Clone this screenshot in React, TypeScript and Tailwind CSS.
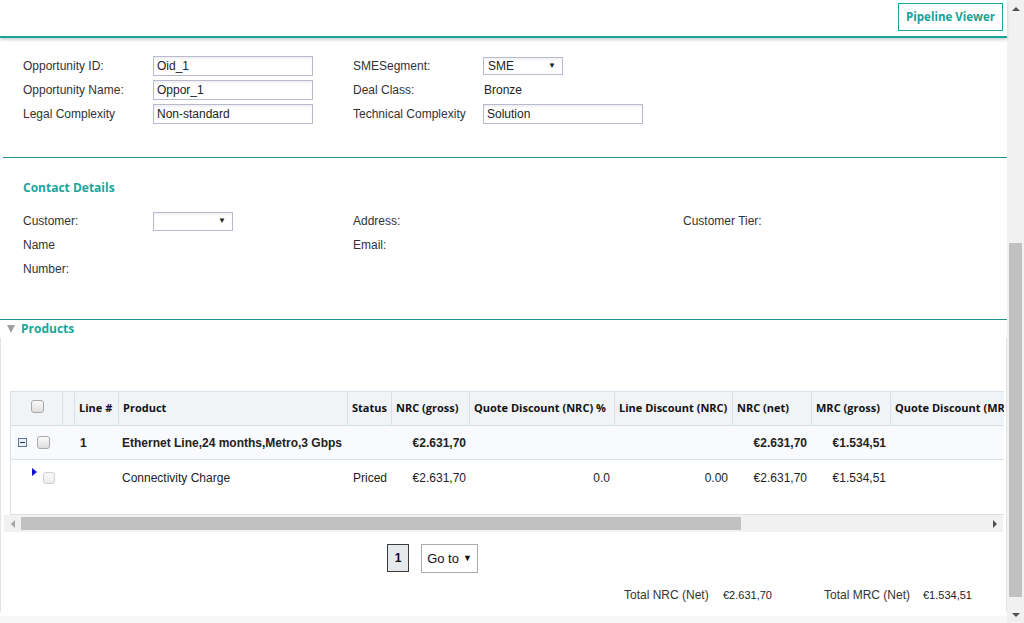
import React from "react";

function Field({ label, children }: { label: string; children?: React.ReactNode }) {
  return (
    <div className="flex w-[330px] shrink-0 items-center">
      <span className="w-[130px] shrink-0">{label}</span>
      {children}
    </div>
  );
}

function TextBox({ value, width = "w-[160px]" }: { value: string; width?: string }) {
  return (
    <div
      className={`flex h-[20px] ${width} items-center border border-[#b9bad0] bg-white pl-[3px] text-[#222] shadow-[inset_0_2px_2px_rgba(0,0,0,0.06)]`}
    >
      {value}
    </div>
  );
}

function SelectBox({ value, h = "h-[18px]" }: { value: string; h?: string }) {
  return (
    <div
      className={`flex ${h} w-[80px] items-center justify-between border border-[#b9bad0] bg-white pl-[4px] pr-[6px] text-[#222] shadow-[inset_0_2px_2px_rgba(0,0,0,0.05)]`}
    >
      <span>{value}</span>
      <span className="text-[8px] leading-none text-[#222]">▼</span>
    </div>
  );
}

function Check({ disabled = false }: { disabled?: boolean }) {
  return (
    <span
      className={
        disabled
          ? "inline-block h-[12px] w-[12px] rounded-[3px] border border-[#d0d0d0] bg-linear-to-b from-[#f8f8f8] to-[#ededed]"
          : "inline-block h-[13px] w-[13px] rounded-[3px] border border-[#a8a8a8] bg-linear-to-b from-[#fbfbfb] to-[#dedede]"
      }
    />
  );
}

const cols =
  "grid grid-cols-[52px_12px_44px_229px_44px_78px_145px_118px_79px_79px_140px]";

const headers = [
  "",
  "",
  "Line #",
  "Product",
  "Status",
  "NRC (gross)",
  "Quote Discount (NRC) %",
  "Line Discount (NRC)",
  "NRC (net)",
  "MRC (gross)",
  "Quote Discount (MRC) %",
];

function ProductsTable() {
  return (
    <div className="ml-[9px] h-[124px] w-[994px] overflow-hidden border-t border-l border-b border-[#d9e1e8]">
      <div className={`${cols} h-[34px] w-[1120px] border-b border-[#d9e1e8] bg-[#f1f4f7] font-['Open_Sans'] text-[11px] font-bold text-[#111]`}>
        {headers.map((h, i) => (
          <div
            key={i}
            className="flex items-center justify-start overflow-hidden whitespace-nowrap border-r border-[#d9e1e8] pl-[4px]"
          >
            {i === 0 ? (
              <span className="ml-[16px]">
                <Check />
              </span>
            ) : (
              h
            )}
          </div>
        ))}
      </div>

      <div className={`${cols} h-[34px] w-[1120px] items-center border-b border-[#d9e1e8] bg-[#f9fafd] font-bold text-[#222]`}>
        <div className="flex items-center gap-[10px] pl-[7px]">
          <span className="flex h-[9px] w-[9px] items-center justify-center border border-[#5f7593] bg-[#e9eef5]">
            <span className="h-px w-[5px] bg-[#1f2f47]" />
          </span>
          <Check />
        </div>
        <div />
        <div className="pl-[5px]">1</div>
        <div className="whitespace-nowrap pl-[3px]">Ethernet Line,24 months,Metro,3 Gbps</div>
        <div />
        <div className="pr-[4px] text-right">€2.631,70</div>
        <div />
        <div />
        <div className="pr-[5px] text-right">€2.631,70</div>
        <div className="pr-[5px] text-right">€1.534,51</div>
        <div />
      </div>

      <div className={`${cols} h-[35px] w-[1120px] items-center text-[#222]`}>
        <div className="flex items-center pl-[21px]">
          <span className="mb-[12px] h-0 w-0 border-y-[4px] border-l-[5px] border-y-transparent border-l-[#1010d0]" />
          <span className="ml-[6px] flex">
            <Check disabled />
          </span>
        </div>
        <div />
        <div />
        <div className="whitespace-nowrap pl-[3px]">Connectivity Charge</div>
        <div className="pl-[5px]">Priced</div>
        <div className="pr-[4px] text-right">€2.631,70</div>
        <div className="pr-[5px] text-right">0.0</div>
        <div className="pr-[5px] text-right">0.00</div>
        <div className="pr-[5px] text-right">€2.631,70</div>
        <div className="pr-[5px] text-right">€1.534,51</div>
        <div />
      </div>
    </div>
  );
}

function HScrollbar() {
  return (
    <div className="ml-[3px] flex h-[17px] w-[999px] items-center bg-[#f1f1f1]">
      <div className="flex w-[17px] items-center justify-center">
        <span className="h-0 w-0 border-y-[4px] border-r-[4px] border-y-transparent border-r-[#a3a3a3]" />
      </div>
      <div className="h-[13px] w-[720px] bg-[#c1c1c1]" />
      <div className="flex-1" />
      <div className="flex w-[17px] items-center justify-center">
        <span className="h-0 w-0 border-y-[4px] border-l-[4px] border-y-transparent border-l-[#505050]" />
      </div>
    </div>
  );
}

function VScrollbar() {
  return (
    <div className="flex h-full w-[17px] flex-col bg-[#f1f1f1]">
      <div className="flex h-[17px] items-center justify-center">
        <span className="h-0 w-0 border-x-[4px] border-b-[4px] border-x-transparent border-b-[#505050]" />
      </div>
      <div className="h-[226px]" />
      <div className="mx-[2px] h-[354px] bg-[#c1c1c1]" />
      <div className="flex-1" />
      <div className="flex h-[17px] items-center justify-center">
        <span className="h-0 w-0 border-x-[4px] border-t-[4px] border-x-transparent border-t-[#505050]" />
      </div>
    </div>
  );
}

export default function App() {
  return (
    <div className="flex h-[623px] w-[1024px] overflow-hidden bg-white font-['Liberation_Sans',Arial,sans-serif] text-[12px] text-[#333]">
      <div className="flex w-[1007px] flex-col">
        <header className="relative z-10 flex h-[38px] shrink-0 items-start justify-end border-b-2 border-[#17a69e] bg-white pt-[3px] pr-[4px] shadow-[0_2px_3px_rgba(0,0,0,0.18)]">
          <button className="h-[28px] w-[105px] border border-[#1aa69e] bg-white font-['Open_Sans'] text-[11.5px] font-bold text-[#16a29a]">
            Pipeline Viewer
          </button>
        </header>

        <section className="mt-[18px] flex flex-col gap-[4px] pl-[23px]">
          <div className="flex h-[20px]">
            <Field label="Opportunity ID:">
              <TextBox value="Oid_1" />
            </Field>
            <Field label="SMESegment:">
              <SelectBox value="SME" />
            </Field>
          </div>
          <div className="flex h-[20px]">
            <Field label="Opportunity Name:">
              <TextBox value="Oppor_1" />
            </Field>
            <Field label="Deal Class:">
              <span className="pl-px text-[#222]">Bronze</span>
            </Field>
          </div>
          <div className="flex h-[20px]">
            <Field label="Legal Complexity">
              <TextBox value="Non-standard" />
            </Field>
            <Field label="Technical Complexity">
              <TextBox value="Solution" />
            </Field>
          </div>
        </section>

        <div className="mt-[33px] ml-[3px] border-t border-[#27908b]" />

        <section className="pl-[23px]">
          <h2 className="mt-[22px] h-[16px] font-['Open_Sans'] text-[12px] leading-[16px] font-bold text-[#1ba49b]">
            Contact Details
          </h2>
          <div className="mt-[15px] flex flex-col gap-[4px]">
            <div className="flex h-[20px]">
              <Field label="Customer:">
                <SelectBox value="" h="h-[19px]" />
              </Field>
              <Field label="Address:" />
              <Field label="Customer Tier:" />
            </div>
            <div className="flex h-[20px]">
              <Field label="Name" />
              <Field label="Email:" />
            </div>
            <div className="flex h-[20px]">
              <Field label="Number:" />
            </div>
          </div>
        </section>

        <div className="mt-[40px] border-t border-[#27908b]" />

        <div className="flex h-[18px] items-center gap-[6px] pl-[7px]">
          <span className="h-0 w-0 border-x-[4.5px] border-t-[8px] border-x-transparent border-t-[#a0a0a0]" />
          <span className="font-['Open_Sans'] text-[12px] font-bold text-[#1ba49b]">Products</span>
        </div>

        <div className="flex h-[274px] flex-col border-x border-[#e4e4e4] pt-[53px]">
          <ProductsTable />
          <HScrollbar />
          <div className="mt-[12px] flex items-start gap-[12px] pl-[386px]">
            <div className="flex h-[28px] w-[22px] items-center justify-center border border-[#3a3a3a] bg-[#e6e9ec] font-bold text-[#111]">
              1
            </div>
            <div className="flex h-[29px] w-[57px] items-center justify-center gap-[4px] border border-[#ababab] bg-white text-[13px] text-[#111]">
              Go to <span className="text-[9px]">▼</span>
            </div>
          </div>
          <div className="mt-[13px] flex items-center pl-[623px] text-[#333]">
            <span className="w-[99px]">Total NRC (Net)</span>
            <span className="w-[101px] text-[11px] text-[#222]">€2.631,70</span>
            <span className="w-[99px]">Total MRC (Net)</span>
            <span className="text-[11px] text-[#222]">€1.534,51</span>
          </div>
        </div>
        <div className="mt-[4px] flex-1 bg-[#f7f7f7]" />
      </div>
      <VScrollbar />
    </div>
  );
}
